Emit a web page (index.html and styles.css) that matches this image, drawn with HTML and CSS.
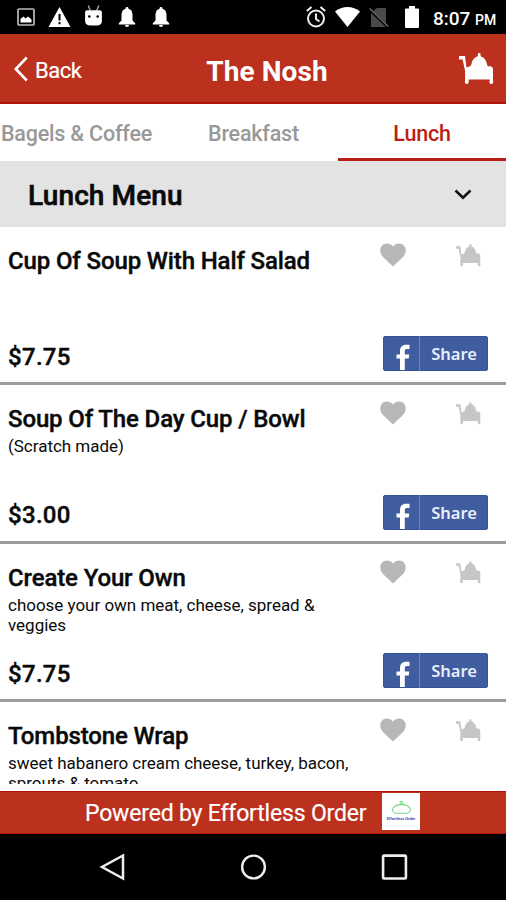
FILE: index.html
```html
<!DOCTYPE html>
<html lang="en">
<head>
<meta charset="utf-8">
<title>The Nosh</title>
<link rel="stylesheet" href="styles.css">
</head>
<body>
<svg class="defs" aria-hidden="true">
  <symbol id="cart" viewBox="0 0 35 32">
    <path d="M0 3h6l1.500 11.500 3.500-1.300h20c2 0 3 1.300 3 3.300v11c.8 1.500-.2 3.500-1.800 3.500s-2.500-2-1.500-3.500V26.500H9.500v1c.8 1.500-.2 3.500-1.700 3.500s-2.500-2-1.700-3.500V18L3.600 6.500H0z"/>
    <path d="M12.500 11c.6-4 3.200-7 6.300-7.800V1.300a1.400 1.400 0 0 1 2.800 0v1.900c3.100.8 5.700 3.800 6.300 7.800l1.100 3H11z"/>
  </symbol>
  <symbol id="heart" viewBox="0 0 26 24">
    <path d="M13 23.500 4 15C1.500 12.500.3 10.500.3 7.300.3 3.500 3.200.6 6.900.6c2.400 0 4.700 1.200 6.100 3.200C14.400 1.800 16.700.6 19.100.6c3.700 0 6.600 2.900 6.600 6.700 0 3.200-1.200 5.200-3.700 7.700z"/>
  </symbol>
  <symbol id="fb" viewBox="0 0 14 26">
    <path d="M4 26V14.500H.5v-4H4V7.300C4 3 6.200.8 10 .8h3.500v4.100H11c-1.800 0-2.200.9-2.200 2.300v3.300h4.500l-.6 4H8.800V26z"/>
  </symbol>
  <symbol id="bell" viewBox="0 0 17 20">
    <path d="M8.500 0c1 0 1.500.7 1.500 1.700C13 2.500 14 5 14 8v5.500l3 3V17.500H0v-1l3-3V8c0-3 1-5.500 4-6.300C7 .7 7.500 0 8.500 0zM6.500 18h4a2 2 0 0 1-4 0z"/>
  </symbol>
</svg>

<div class="screen">
  <div class="status">
    <svg class="st-image" viewBox="0 0 18 18"><rect x="1" y="1" width="16" height="16" rx="1" fill="none" stroke="#bbb" stroke-width="1.700"/><path d="M3.500 14.500v-3.500l3-2.500 2 2 2.500-2 3.500 3v3z" fill="#fff"/></svg>
    <svg class="st-warn" viewBox="0 0 22 20"><path d="M11 0 22 20H0z" fill="#fff"/><path d="M11 7v6.500M11 15v2.300" stroke="#000" stroke-width="2"/></svg>
    <svg class="st-droid" viewBox="0 0 18 20"><path d="m4 .5 2 5M14 .5l-2 5" stroke="#aaa" stroke-width="1.300"/><path d="M1 7q0-2 2-2h12q2 0 2 2v8q0 4.500-5 4.500H6q-5 0-5-4.500z" fill="#fff"/><circle cx="5" cy="11" r="1.200"/><circle cx="13" cy="11" r="1.200"/></svg>
    <svg class="st-bell" viewBox="0 0 17 20"><use href="#bell"/></svg>
    <svg class="st-bell" viewBox="0 0 17 20"><use href="#bell"/></svg>
    <span class="spring"></span>
    <svg class="st-alarm" viewBox="0 0 20 22"><g fill="none" stroke="#eee" stroke-width="2"><circle cx="10" cy="12.500" r="8"/><path d="M10 7.500V13l3.500 2.500M.8 5 5.500 1M19.200 5l-4.700-4"/></g></svg>
    <svg class="st-wifi" viewBox="0 0 25 20"><path d="M0 4.500C7-1.500 18-1.500 25 4.500L12.500 20z" fill="#fff"/></svg>
    <svg class="st-sim" viewBox="0 0 20 21"><path d="M7.500 1H17v19H2V6.500z" fill="#4a4a4a"/><path d="m0 2 19 18" stroke="#000" stroke-width="3"/><path d="m.7 1.500 18.500 18" stroke="#666" stroke-width="1.600"/></svg>
    <svg class="st-batt" viewBox="0 0 14 22"><path d="M4 0h6v2.500h3q1 0 1 1V21q0 1-1 1H1q-1 0-1-1V3.500q0-1 1-1h3z" fill="#fff"/></svg>
    <span class="clock">8:07</span><span class="ampm">PM</span>
  </div>

  <header class="header">
    <a class="back"><svg viewBox="0 0 14 26"><path d="M12.800 1.500 1.800 13l11 11.500" fill="none" stroke="#fff" stroke-width="2.600"/></svg><span>Back</span></a>
    <h1>The Nosh</h1>
    <svg class="header-cart"><use href="#cart"/></svg>
  </header>

  <nav class="tabs">
    <span class="tab first">Bagels &amp; Coffee</span>
    <span class="tab mid">Breakfast</span>
    <span class="tab active">Lunch</span>
  </nav>

  <div class="section">
    <h2>Lunch Menu</h2>
    <svg viewBox="0 0 18 11"><path d="m1.500 1.500 7.500 7.300 7.500-7.300" fill="none" stroke="#111" stroke-width="2.600"/></svg>
  </div>

  <main class="list">
    <article class="item">
      <div class="info"><h3>Cup Of Soup With Half Salad</h3><p></p><b class="price">$7.75</b></div>
      <div class="actions"><div class="icons"><svg class="heart"><use href="#heart"/></svg><svg class="cart"><use href="#cart"/></svg></div>
      <div class="share"><span class="mark"><svg><use href="#fb"/></svg></span><span class="label">Share</span></div></div>
    </article>
    <article class="item">
      <div class="info"><h3>Soup Of The Day Cup / Bowl</h3><p>(Scratch made)</p><b class="price">$3.00</b></div>
      <div class="actions"><div class="icons"><svg class="heart"><use href="#heart"/></svg><svg class="cart"><use href="#cart"/></svg></div>
      <div class="share"><span class="mark"><svg><use href="#fb"/></svg></span><span class="label">Share</span></div></div>
    </article>
    <article class="item">
      <div class="info"><h3>Create Your Own</h3><p>choose your own meat, cheese, spread &amp;<br>veggies</p><b class="price">$7.75</b></div>
      <div class="actions"><div class="icons"><svg class="heart"><use href="#heart"/></svg><svg class="cart"><use href="#cart"/></svg></div>
      <div class="share"><span class="mark"><svg><use href="#fb"/></svg></span><span class="label">Share</span></div></div>
    </article>
    <article class="item last">
      <div class="info"><h3>Tombstone Wrap</h3><p>sweet habanero cream cheese, turkey, bacon,<br>sprouts &amp; tomato</p></div>
      <div class="actions"><div class="icons"><svg class="heart"><use href="#heart"/></svg><svg class="cart"><use href="#cart"/></svg></div></div>
    </article>
  </main>

  <footer class="powered">
    <span>Powered by Effortless Order</span>
    <div class="logo"><svg viewBox="0 0 28 18"><g fill="none" stroke="#75d58a" stroke-width="1.300"><path d="M7 16C-1 13 4 5.500 14 5.500S29 13 21 16z"/><circle cx="14" cy="3" r="1.700"/></g></svg><small>Effortless Order</small></div>
  </footer>

  <div class="sysnav">
    <svg viewBox="0 0 26 28"><path d="M23.500 2.500v23L2.500 14z"/></svg>
    <svg viewBox="0 0 28 28"><circle cx="14" cy="14" r="11.800"/></svg>
    <svg viewBox="0 0 26 26"><rect x="2" y="2" width="22" height="22" rx="1"/></svg>
  </div>
</div>
</body>
</html>
```
FILE: styles.css
```css
* { box-sizing: border-box; }
body { margin: 0; font-family: Roboto, "Liberation Sans", sans-serif; color: #0a0a0a; background: #fff; }
h1, h2, h3, p { margin: 0; }
.defs { position: absolute; width: 0; height: 0; }
.screen { width: 506px; height: 900px; display: flex; flex-direction: column; overflow: hidden; }

.status { height: 34px; flex: none; background: #000; color: #fff; display: flex; align-items: center; padding: 0 10px 0 17px; }
.status svg { flex: none; }
.st-image { width: 18px; height: 18px; margin-right: 13px; }
.st-warn { width: 23px; height: 20px; margin-right: 13px; }
.st-droid { width: 19px; height: 21px; margin: -3px 15px 0 0; }
.st-bell { width: 18px; height: 20px; margin-right: 16px; fill: #fff; }
.spring { flex: 1; }
.st-alarm { width: 20px; height: 22px; margin-right: 9px; }
.st-wifi { width: 25px; height: 20px; margin-right: 9px; }
.st-sim { width: 20px; height: 21px; margin-right: 16px; }
.st-batt { width: 14px; height: 22px; margin: 0 14px 0 0; }
.clock { font-size: 19px; font-weight: 500; line-height: 34px; width: 42px; padding-top: 3px; white-space: nowrap; }
.ampm { font-size: 14px; font-weight: 500; line-height: 34px; width: 21px; padding-top: 6px; }

.header { height: 70px; flex: none; display: grid; grid-template-columns: 134px 1fr 106px; align-items: center; background: #bc301e; border-bottom: 2px solid #b0150d; color: #fff; }
.back { display: flex; align-items: center; gap: 7px; padding: 3px 0 0 14px; font-size: 22px; letter-spacing: -.5px; -webkit-text-stroke: .2px; }
.back svg { width: 14px; height: 26px; margin-top: -2px; }
.back span { padding-top: 1px; }
.header h1 { font-size: 28px; font-weight: 700; text-align: center; padding-top: 7px; letter-spacing: .1px; }
.header-cart { width: 35px; height: 32px; fill: #fff; justify-self: end; margin: 2px 12px 0 0; }

.tabs { height: 57px; flex: none; display: grid; grid-template-columns: 169px 169px 168px; text-align: center; font-size: 21.500px; font-weight: 500; line-height: 59px; letter-spacing: -.2px; color: #989898; }
.tab { white-space: nowrap; height: 57px; }
.tab.first { text-align: left; padding-left: 1px; }
.tab.active { color: #bc1d14; border-bottom: 3px solid #b91d14; }

.section { height: 66px; flex: none; background: #e3e3e3; display: flex; align-items: center; justify-content: space-between; padding: 2px 34px 0 28px; }
.section h2 { font-size: 28px; font-weight: 500; letter-spacing: .1px; -webkit-text-stroke: .6px; }
.section svg { width: 18px; height: 11px; margin-top: -1px; }

.list { height: 557px; flex: none; overflow: hidden; }
.item { height: 158.300px; border-bottom: 3px solid #9c9c9c; display: flex; justify-content: space-between; padding: 18px 18px 11px 8px; }
.item.last { border-bottom: 0; }
.info { display: flex; flex-direction: column; white-space: nowrap; }
.info > * { flex: none; }
.info h3 { font-size: 24px; font-weight: 500; line-height: 32px; letter-spacing: -.13px; -webkit-text-stroke: .4px; }
.info p { font-size: 17px; line-height: 20px; letter-spacing: -.02px; margin-top: 1px; height: 40px; }
.price { font-size: 24px; font-weight: 500; line-height: 32px; margin-top: 23px; letter-spacing: .3px; -webkit-text-stroke: .4px; }
.actions { width: 105px; display: flex; flex-direction: column; justify-content: space-between; }
.icons { display: flex; justify-content: space-between; padding: 0 7px 0 0; margin-left: -3px; }
.heart { width: 26px; height: 24px; fill: #b7b7b7; margin-top: -2px; }
.cart { width: 25px; height: 23px; fill: #c6c6c6; margin-top: -1px; }
.share { height: 35px; border-radius: 3px; background: #405d9f; box-shadow: inset 0 0 0 1px #34539b; color: #e9eefb; display: flex; }
.mark { width: 37px; border-right: 1px solid #7187bb; padding: 8px 0 0 13px; }
.mark svg { width: 14px; height: 26px; fill: #fff; display: block; }
.label { flex: 1; text-align: center; font: 600 16.500px/36px "Noto Sans", sans-serif; }

.list + .powered { margin-top: 7px; }
.powered { height: 43px; flex: none; background: #bc301e; border-top: 1px solid #b0150d; border-bottom: 1px solid #b0150d; color: #fff; font-size: 23px; letter-spacing: -.18px; display: flex; align-items: center; padding-left: 85px; white-space: nowrap; }
.powered > span { width: 297px; padding-top: 1px; -webkit-text-stroke: .2px; }
.logo { width: 38px; height: 37px; background: #fff; display: flex; flex-direction: column; align-items: center; padding-top: 6px; margin-top: -2px; }
.logo svg { width: 23px; height: 17px; }
.logo small { font-size: 4px; line-height: 6px; letter-spacing: 0; color: #3a49b5; font-weight: 700; }

.sysnav { height: 66px; flex: none; background: #000; display: flex; align-items: center; justify-content: space-between; padding: 0 98px 0 99px; }
.sysnav svg { width: 27px; height: 28px; fill: none; stroke: #eee; stroke-width: 2.500; }
```
